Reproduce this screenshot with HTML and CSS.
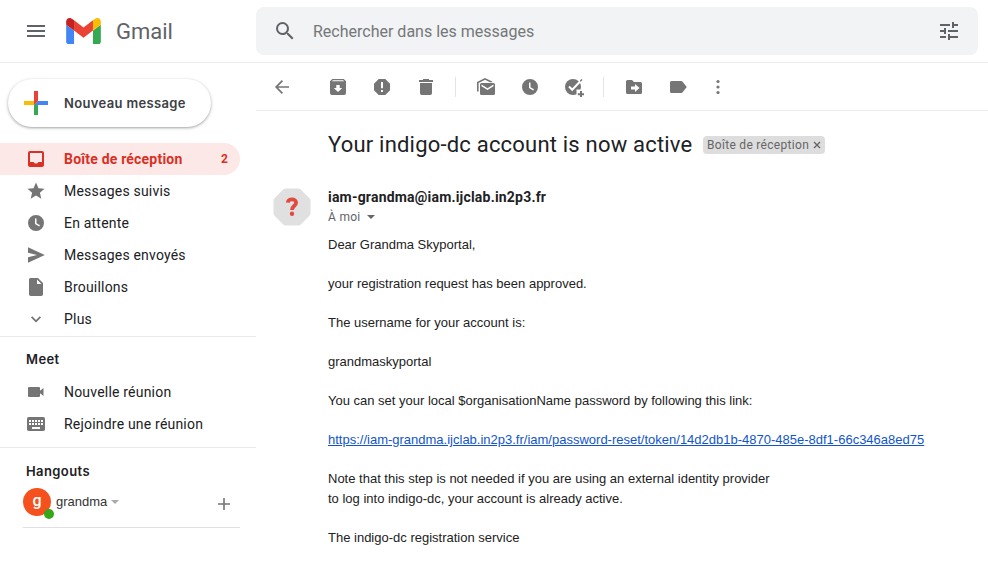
FILE: index.html
```html
<!DOCTYPE html>
<html lang="fr">
<head>
<meta charset="utf-8">
<title>Gmail</title>
<link rel="stylesheet" href="styles.css">
</head>
<body>
<header class="header">
  <div class="brand">
    <svg class="menu" width="18" height="12" viewBox="0 0 18 12"><path d="M0 0h18v2H0zM0 5h18v2H0zM0 10h18v2H0z"/></svg>
    <svg class="logo" width="35" height="26" viewBox="52 42 88 66"><path fill="#4285f4" d="M58 108h14V74L52 59v43c0 3.320 2.690 6 6 6"/><path fill="#34a853" d="M120 108h14c3.320 0 6-2.690 6-6V59l-20 15"/><path fill="#fbbc04" d="M120 48v26l20-15v-8c0-7.420-8.470-11.650-14.400-7.200"/><path fill="#ea4335" d="M72 74V48l24 18 24-18v26L96 92"/><path fill="#c5221f" d="M52 51v8l20 15V48l-5.600-4.200c-5.940-4.450-14.400-.22-14.400 7.200"/></svg>
    <span class="brand-name">Gmail</span>
  </div>
  <div class="search">
    <svg class="search-icon" width="24" height="24" viewBox="0 0 24 24"><path d="M15.500 14h-.79l-.28-.27A6.470 6.470 0 0 0 16 9.500 6.500 6.500 0 1 0 9.500 16c1.610 0 3.090-.59 4.230-1.570l.27.28v.79l5 4.990L20.490 19l-4.990-5zm-6 0A4.500 4.500 0 1 1 14 9.500 4.500 4.500 0 0 1 9.500 14z"/></svg>
    <span class="search-text">Rechercher dans les messages</span>
    <svg class="tune" width="24" height="24" viewBox="0 0 24 24"><path d="M3 17v2h6v-2H3zM3 5v2h10V5H3zm10 16v-2h8v-2h-8v-2h-2v6h2zM7 9v2H3v2h4v2h2V9H7zm14 4v-2H11v2h10zm-6-4h2V7h4V5h-4V3h-2v6z"/></svg>
  </div>
</header>
<div class="layout">
  <aside class="sidebar">
    <button class="compose">
      <svg width="24" height="24" viewBox="0 0 24 24"><path fill="#34a853" d="M10 14l4-4v14h-4z"/><path fill="#4285f4" d="M14 10h10v4H10z"/><path fill="#fbbc04" d="M0 10h12l-2 4H0z"/><path fill="#ea4335" d="M10 0h4v10l-4 4z"/></svg>
      <span>Nouveau message</span>
    </button>
    <nav class="nav">
      <a class="row active"><svg width="20" height="20" viewBox="0 0 20 20"><path fill-rule="evenodd" d="M4 2h12a2 2 0 0 1 2 2v12a2 2 0 0 1-2 2H4a2 2 0 0 1-2-2V4a2 2 0 0 1 2-2zm0 2v9h3.600a2.600 2.600 0 0 0 4.800 0H16V4z"/></svg><span class="label">Boîte de réception</span><span class="count">2</span></a>
      <a class="row"><svg width="20" height="20" viewBox="0 0 20 20"><path d="M10 1.500l2.500 5.800 6 .5-4.600 4 1.400 6L10 14.500l-5.300 3.300 1.400-6-4.600-4 6-.5z"/></svg><span class="label">Messages suivis</span></a>
      <a class="row"><svg width="20" height="20" viewBox="0 0 20 20"><path fill-rule="evenodd" d="M10 2a8 8 0 1 0 0 16 8 8 0 0 0 0-16zM9 5.500h1.500v4.700l3.500 2-.8 1.300L9 11z"/></svg><span class="label">En attente</span></a>
      <a class="row"><svg width="20" height="20" viewBox="0 0 20 20"><path d="M2 2.200v5.600L11 10l-9 2.200v5.600L18.800 10z"/></svg><span class="label">Messages envoyés</span></a>
      <a class="row"><svg width="20" height="20" viewBox="0 0 20 20"><path fill-rule="evenodd" d="M4.500 1H12l5 5v11.300a1.700 1.700 0 0 1-1.700 1.700H4.700A1.700 1.700 0 0 1 3 17.300V2.500A1.500 1.500 0 0 1 4.500 1zM11 2.500V7h4.500z"/></svg><span class="label">Brouillons</span></a>
      <a class="row"><svg width="20" height="20" viewBox="0 0 20 20"><path d="M5 8.500L6.200 7.300 10 11.100l3.800-3.800L15 8.500l-5 5z"/></svg><span class="label">Plus</span></a>
    </nav>
    <section class="meet">
      <h2>Meet</h2>
      <a class="row"><svg width="20" height="20" viewBox="0 0 20 20"><path d="M3 5h10a1 1 0 0 1 1 1v2.800L17.500 6v8L14 11.200V14a1 1 0 0 1-1 1H3a1 1 0 0 1-1-1V6a1 1 0 0 1 1-1z"/></svg><span class="label">Nouvelle réunion</span></a>
      <a class="row"><svg width="20" height="20" viewBox="0 0 20 20"><rect x="1" y="3" width="18" height="14" rx="1.700"/><path fill="#fff" d="M3 6h2v2H3zM6 6h2v2H6zM9 6h2v2H9zM12 6h2v2h-2zM15 6h2v2h-2zM3 9h2v2H3zM6 9h2v2H6zM9 9h2v2H9zM12 9h2v2h-2zM15 9h2v2h-2zM6 13h8v2H6z"/></svg><span class="label">Rejoindre une réunion</span></a>
    </section>
    <section class="hangouts">
      <h2>Hangouts</h2>
      <div class="user">
        <span class="avatar">g<i class="status"></i></span>
        <span class="user-name">grandma</span>
        <i class="caret pale"></i>
        <svg class="add" width="12" height="12" viewBox="0 0 12 12"><path d="M5.200 0h1.600v5.200H12v1.600H6.800V12H5.200V6.800H0V5.200h5.200z"/></svg>
      </div>
    </section>
  </aside>
  <main class="main">
    <div class="toolbar">
      <svg class="back" width="20" height="20" viewBox="0 0 20 20"><path d="M17 9.200H6.100l4.900-4.900L9.800 3 3 10l6.800 7 1.200-1.300-4.900-4.900H17z"/></svg>
      <svg width="20" height="20" viewBox="0 0 20 20"><path fill-rule="evenodd" d="M4.200 2h11.600L18 4.300V16a2 2 0 0 1-2 2H4a2 2 0 0 1-2-2V4.300zM4 4.200h12l-.8-.9H4.800zM8.300 8v3H5.800l4.200 4 4.200-4h-2.500V8z"/></svg>
      <svg width="20" height="20" viewBox="0 0 20 20"><path fill-rule="evenodd" d="M6.700 2h6.600L18 6.700v6.600L13.300 18H6.700L2 13.300V6.700zM9 5v6.300h2V5zm0 8v2h2v-2z"/></svg>
      <svg width="20" height="20" viewBox="0 0 20 20"><path d="M7 2h6v1h4v2H3V3h4zM4 6h12v10.200a1.800 1.800 0 0 1-1.800 1.800H5.800A1.800 1.800 0 0 1 4 16.200z"/></svg>
      <i class="sep"></i>
      <svg width="20" height="20" viewBox="0 0 20 20"><path fill-rule="evenodd" d="M1 14.500V5l8-4 7.200 3.500v.8H14L9 2.800 2.600 6v8.500zM5.500 6h12A1.500 1.500 0 0 1 19 7.500v9a1.500 1.500 0 0 1-1.500 1.500h-12A1.500 1.500 0 0 1 4 16.500v-9A1.500 1.500 0 0 1 5.500 6zm0 1.500v1.700l6 3.800 6-3.800V7.500l-6 3.700z"/></svg>
      <svg width="20" height="20" viewBox="0 0 20 20"><path fill-rule="evenodd" d="M10 2a8 8 0 1 0 0 16 8 8 0 0 0 0-16zM9 5.500h1.500v4.700l3.500 2-.8 1.300L9 11z"/></svg>
      <svg width="20" height="20" viewBox="0 0 20 20"><circle cx="9" cy="10" r="8"/><path d="M5 9.500l3.200 3.200L17.500 3" fill="none" stroke="#fff" stroke-width="2"/><path d="M16 3.200l1.500-1.200 1 1-2 2z"/><path fill="#fff" d="M12.500 12.500H19v8h-6.500z"/><path d="M16 14h2v2.200h2.200v2H18V20h-2v-1.800h-2.200v-2H16z"/></svg>
      <i class="sep"></i>
      <svg width="20" height="20" viewBox="0 0 20 20"><path fill-rule="evenodd" d="M3.500 3H8l2 2h6.500A1.500 1.500 0 0 1 18 6.500v9a1.500 1.500 0 0 1-1.500 1.500h-13A1.500 1.500 0 0 1 2 15.500v-11A1.500 1.500 0 0 1 3.500 3zM11 7v2.500H7v3h4V15l4.500-4z"/></svg>
      <svg width="20" height="20" viewBox="0 0 20 20"><path d="M3.500 4h9.700c.6 0 1.100.3 1.400.8L18.800 10l-4.200 5.200c-.3.500-.8.800-1.400.8H3.500A1.500 1.500 0 0 1 2 14.500v-9A1.500 1.500 0 0 1 3.500 4z"/></svg>
      <svg class="more" width="20" height="20" viewBox="0 0 20 20"><circle cx="10" cy="4.500" r="1.600"/><circle cx="10" cy="10" r="1.600"/><circle cx="10" cy="15.500" r="1.600"/></svg>
    </div>
    <article class="mail">
      <div class="subject">
        <h1>Your indigo-dc account is now active</h1>
        <span class="chip">Boîte de réception<svg width="8" height="8" viewBox="0 0 8 8"><path d="M1 1l6 6M7 1L1 7"/></svg></span>
      </div>
      <div class="message">
        <svg class="sender-pic" width="38" height="38" viewBox="0 0 38 38"><path fill="#e0e0e0" d="M12.500.5h13a3 3 0 0 1 2 .8l9.200 9.200a3 3 0 0 1 .8 2v13a3 3 0 0 1-.8 2l-9.200 9.200a3 3 0 0 1-2 .8h-13a3 3 0 0 1-2-.8l-9.200-9.200a3 3 0 0 1-.8-2v-13a3 3 0 0 1 .8-2l9.200-9.200a3 3 0 0 1 2-.8z"/><path fill="none" stroke="#e04a3f" stroke-width="3.800" d="M14.800 14.600c.2-4.400 8.300-4.200 8.300.1 0 3-4.100 3.200-4.100 7.300"/><circle fill="#e04a3f" cx="19" cy="25.800" r="2.200"/></svg>
        <div class="content">
          <div class="sender">iam-grandma@iam.ijclab.in2p3.fr</div>
          <div class="to">À moi<i class="caret"></i></div>
          <div class="text">
            <p>Dear Grandma Skyportal,</p>
            <p>your registration request has been approved.</p>
            <p>The username for your account is:</p>
            <p>grandmaskyportal</p>
            <p>You can set your local $organisationName password by following this link:</p>
            <p><a class="link">https://iam-grandma.ijclab.in2p3.fr/iam/password-reset/token/14d2db1b-4870-485e-8df1-66c346a8ed75</a></p>
            <p>Note that this step is not needed if you are using an external identity provider<br>to log into indigo-dc, your account is already active.</p>
            <p>The indigo-dc registration service</p>
          </div>
        </div>
      </div>
    </article>
  </main>
</div>
</body>
</html>
```
FILE: styles.css
```css
* { box-sizing: border-box; }
body { margin: 0; height: 567px; overflow: hidden; background: #fff; color: #202124; font-family: Roboto, "Liberation Sans", sans-serif; }
svg { display: block; flex: none; fill: #757575; }
h1, h2, p { margin: 0; font-weight: 400; }

.header { display: flex; height: 63px; border-bottom: 1px solid #ebebeb; padding-top: 7px; }
.brand { display: flex; align-items: center; width: 256px; height: 48px; padding-left: 27px; }
.menu { fill: #5f6368; }
.logo { margin-left: 21px; }
.brand-name { margin-left: 15px; padding-top: 2px; font-size: 22px; line-height: 28px; color: #5f6368; }
.search { display: flex; align-items: center; width: 722px; height: 48px; background: #f1f3f4; border-radius: 8px; padding: 0 17px; }
.search svg { fill: #5f6368; }
.search-text { margin-left: 16px; flex: 1; font-size: 16px; color: #757779; white-space: nowrap; }

.layout { display: flex; }
.sidebar { width: 256px; padding-top: 16px; }
.compose { display: flex; align-items: center; width: 203px; height: 48px; margin: 0 0 16px 8px; padding: 0 0 0 16px; border: 0; border-radius: 24px; background: #fff; box-shadow: 0 1px 2px rgba(60,64,67,.3), 0 1px 3px 1px rgba(60,64,67,.15); font: 600 13px Inter, sans-serif; letter-spacing: .35px; color: #3c4043; gap: 16px; white-space: nowrap; }
.compose span { padding-bottom: 1px; }
.nav { padding-bottom: 1px; border-bottom: 1px solid #e8eaed; }
.row { display: flex; align-items: center; height: 32px; width: 240px; padding-left: 26px; font-size: 14px; letter-spacing: .2px; }
.label { margin-left: 18px; white-space: nowrap; }
.row.active { background: #fce8e6; color: #d93025; font-weight: 700; border-radius: 0 16px 16px 0; }
.row.active svg { fill: #d93025; }
.count { margin-left: auto; padding-right: 12px; font-size: 12px; }
.meet { height: 111px; border-bottom: 1px solid #e8eaed; }
h2 { font: 600 13px/20px Inter, sans-serif; letter-spacing: .4px; padding-left: 26px; }
.meet h2 { padding-top: 12px; height: 39px; }
.hangouts h2 { padding-top: 13px; height: 40px; }
.user { display: flex; align-items: center; height: 40px; margin: 0 16px 0 23px; padding-bottom: 12px; border-bottom: 1px solid #e0e0e0; font: 13px "Liberation Sans", sans-serif; color: #333; }
.avatar { position: relative; width: 28px; height: 28px; border-radius: 50%; background: #f4511e; color: #fff; font: 500 16px/26px Roboto, sans-serif; text-align: center; }
.status { position: absolute; left: 21px; top: 21px; width: 10px; height: 10px; border-radius: 50%; background: #34a818; }
.user-name { margin-left: 5px; }
.caret { display: inline-block; border: 4px solid transparent; border-top-color: #666; border-bottom: 0; margin-left: 6px; }
.caret.pale { border-top-color: #aaa; margin-left: 4px; }
.add { margin: 4px 10px 0 auto; }

.main { width: 732px; }
.toolbar { display: flex; align-items: center; height: 48px; border-bottom: 1px solid #ebebeb; padding-left: 16px; gap: 24px; }
.back { margin-right: 12px; }
.sep { width: 1px; height: 20px; background: #e4e4e4; margin: 0 -4px 0 -5px; }
.more { margin-left: -4px; }
.subject { display: flex; align-items: center; padding: 20px 0 0 72px; height: 48px; }
h1 { font-size: 22px; line-height: 28px; letter-spacing: .2px; white-space: nowrap; width: 375px; }
.chip { display: flex; align-items: center; justify-content: space-between; width: 122px; height: 18px; padding: 0 4px; border-radius: 4px; background: #ddd; color: #666; font-size: 12px; letter-spacing: .3px; white-space: nowrap; }
.chip svg { fill: none; stroke: #666; stroke-width: 1.400; }
.message { display: flex; padding: 29px 0 0 17px; }
.sender-pic { margin-right: 17px; }
.sender { font-size: 14px; line-height: 20px; font-weight: 700; letter-spacing: .2px; margin-top: -1px; }
.to { display: flex; align-items: center; height: 20px; font-size: 12px; letter-spacing: .3px; color: #5f6368; }
.text { margin-top: 8px; font: 13px/19.5px "Liberation Sans", Arial, sans-serif; color: #222; white-space: nowrap; }
.text p + p { margin-top: 19.5px; }
.link { color: #15c; text-decoration: underline; }
```
